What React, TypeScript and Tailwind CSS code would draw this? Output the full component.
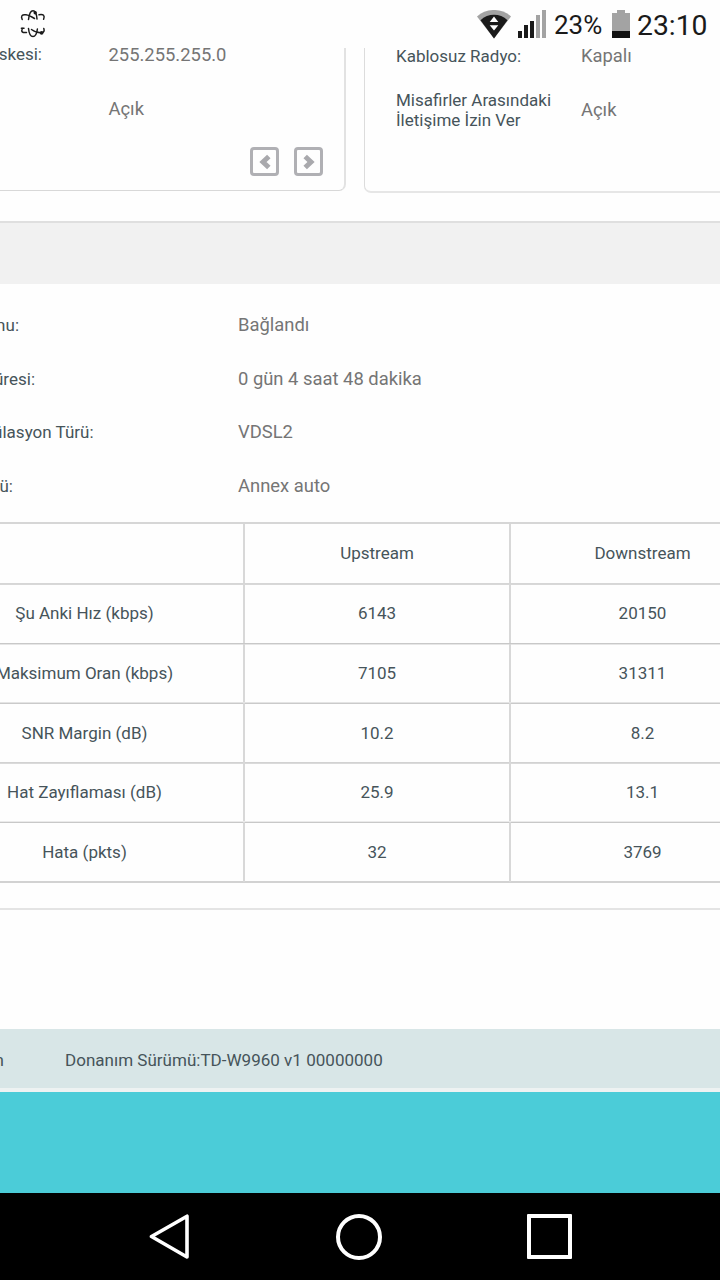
import type { ReactNode } from "react";

const connection = [
  { label: "Durumu:", value: "Bağlandı", labelEnd: "w-[19px]", height: "h-[54px]" },
  { label: "Süresi:", value: "0 gün 4 saat 48 dakika", labelEnd: "w-[35px]", height: "h-[54px]" },
  { label: "Modülasyon Türü:", value: "VDSL2", labelEnd: "w-[93.5px]", height: "h-[53px]" },
  { label: "Türü:", value: "Annex auto", labelEnd: "w-[13px]", height: "h-[54px]" },
];

const stats = [
  { name: "Şu Anki Hız (kbps)", up: "6143", down: "20150", cls: "h-[60px] leading-[58px] border-[#d6d6d6] shadow-[inset_0_1px_0_#d8d8d8]" },
  { name: "Maksimum Oran (kbps)", up: "7105", down: "31311", cls: "h-[59px] leading-[58px] border-[#c8c8c8] shadow-[inset_0_1px_0_#e6e6e6]" },
  { name: "SNR Margin (dB)", up: "10.2", down: "8.2", cls: "h-[60px] leading-[60px] border-[#e4e4e4] shadow-[inset_0_1px_0_#cacaca]" },
  { name: "Hat Zayıflaması (dB)", up: "25.9", down: "13.1", cls: "h-[59px] leading-[58px] border-[#d2d2d2] shadow-[inset_0_1px_0_#dadada]" },
  { name: "Hata (pkts)", up: "32", down: "3769", cls: "h-[60px] leading-[60px] border-[#ebebeb] shadow-[inset_0_1px_0_#c8c8c8]" },
];

// label whose beginning is scrolled off the left edge
function CutLabel({ children, className }: { children: ReactNode; className: string }) {
  return (
    <div className={`flex shrink-0 justify-end overflow-hidden whitespace-nowrap text-[17px] text-[#46545a] ${className}`}>
      <span>{children}</span>
    </div>
  );
}

function AtomIcon() {
  return (
    <svg width="26" height="30" viewBox="0 0 26 30" fill="none" stroke="#1c1c1c" strokeWidth="1.5" strokeLinecap="round">
      <path d="M2.2 10.5C0.6 7 2 5.2 6 5.8C9 6.2 12 8 14.5 9.5" />
      <path d="M8.5 10.5C9.3 4 11 1.8 13 1.8C15.2 1.8 16.6 5 17 10" />
      <path d="M19 5.8C23.5 5 25.1 6.5 23.6 10.3" />
      <circle cx="15.2" cy="3.8" r="1.7" fill="#1c1c1c" stroke="none" />
      <path d="M2.4 19.5C0.8 22.6 2.2 24 6.5 23.5" />
      <path d="M1.4 19.3h2.6" />
      <path d="M8.5 19.5C9 24.5 11 27.6 13 27.6C15 27.6 16.8 24.5 17.4 20" />
      <path d="M11.5 20.5C14.5 22.8 18 24 21.5 23.8C24 23.6 24.6 21.8 23.8 19.5" />
      <circle cx="21.6" cy="23.8" r="1.9" fill="#1c1c1c" stroke="none" />
    </svg>
  );
}

function WifiIcon() {
  return (
    <svg width="34" height="29" viewBox="0 0 34 29">
      <path d="M0 6.5C9-2.2 25-2.2 34 6.5L17 28.5Z" fill="#a3a3a3" />
      <path d="M3.5 10.2C11 3 23 3 30.5 10.2L17 28.5Z" fill="#1a1a1a" />
      <path d="M12.7 12L17 6.5L21.3 12ZM12.7 15.3H21.3L17 20.6Z" fill="#fff" />
    </svg>
  );
}

function SignalIcon() {
  return (
    <svg width="28" height="28" viewBox="0 0 28 28">
      <path d="M0 21h4v7H0zM6 15h4v13H6zM12 11h4v17h-4z" fill="#1a1a1a" />
      <path d="M18 5h4v23h-4zM24 0h4v28h-4z" fill="#a3a3a3" />
    </svg>
  );
}

function BatteryIcon() {
  return (
    <svg width="18" height="28" viewBox="0 0 18 28">
      <path d="M5 0h8v3h5v18H0V3h5z" fill="#a3a3a3" />
      <path d="M0 21h18v7H0z" fill="#111" />
    </svg>
  );
}

function PagerButton({ next = false }: { next?: boolean }) {
  return (
    <button type="button" className="flex size-[29px] items-center justify-center rounded-[4px] border-3 border-[#b0b0b4]">
      <svg width="12" height="16" viewBox="0 0 12 16" className={`shrink-0 ${next ? "rotate-180" : ""}`}>
        <path d="M8 4.2L4 8L8 11.8" fill="none" stroke="#a9a9ad" strokeWidth="5" strokeLinecap="square" />
      </svg>
    </button>
  );
}

export default function App() {
  return (
    <div className="flex h-[1280px] w-[720px] flex-col overflow-hidden bg-[#fefefe] font-['Roboto',sans-serif] text-[17px] text-[#46545a]">
      <header className="flex h-12 shrink-0 items-center text-[#1a1a1a]">
        <div className="ml-[20px]">
          <AtomIcon />
        </div>
        <div className="ml-auto flex items-center pr-[13px]">
          <WifiIcon />
          <div className="ml-[7px]">
            <SignalIcon />
          </div>
          <span className="ml-[8px] w-[49px] whitespace-nowrap pt-[2px] text-[26px] leading-[46px]">23%</span>
          <div className="ml-[9px]">
            <BatteryIcon />
          </div>
          <span className="ml-[7px] w-[70px] whitespace-nowrap pt-[4px] text-[28.3px] leading-[44px]">23:10</span>
        </div>
      </header>

      <section className="flex h-[145px] shrink-0 gap-[18px]">
        <div className="flex h-[143px] w-[346px] flex-col rounded-br-[7px] border-r-2 border-b border-r-[#e2e2e2] border-b-[#d8d8d8]">
          <div className="flex h-[14px] items-center">
            <CutLabel className="w-[42px]">Alt Ağ Maskesi:</CutLabel>
            <span className="ml-[66.5px] text-[18.4px] text-[#757575]">255.255.255.0</span>
          </div>
          <div className="mt-[33px] flex h-[28px] items-center pl-[108.5px] text-[18.4px] text-[#757575]">Açık</div>
          <div className="mt-[24px] flex gap-[15px] pl-[250px]">
            <PagerButton />
            <PagerButton next />
          </div>
        </div>
        <div className="h-[145px] flex-1 rounded-bl-[7px] border-b-2 border-l border-b-[#e6e6e6] border-l-[#dcdcdc] pl-[31px]">
          <div className="flex h-4 items-center">
            <span className="w-[185px] pt-[2px]">Kablosuz Radyo:</span>
            <span className="text-[18.4px] text-[#757575]">Kapalı</span>
          </div>
          <div className="mt-[26px] flex h-[40px] items-center">
            <span className="w-[185px] leading-5">
              Misafirler Arasındaki
              <br />
              İletişime İzin Ver
            </span>
            <span className="text-[18.4px] text-[#757575]">Açık</span>
          </div>
        </div>
      </section>

      <div className="mt-[28px] h-[63px] shrink-0 border-t-2 border-[#dfdfdf] bg-[#f1f1f1]" />

      <section className="h-[238px] shrink-0 pt-[14px]">
        {connection.map((row) => (
          <div key={row.label} className={`flex items-center leading-[26px] ${row.height}`}>
            <div className="w-[238px] pb-[1px]">
              <CutLabel className={row.labelEnd}>{row.label}</CutLabel>
            </div>
            <span className="pb-[1px] text-[18.4px] text-[#757575]">{row.value}</span>
          </div>
        ))}
      </section>

      <section className="-ml-[75px] w-[850px] shrink-0">
        <div className="grid h-[61px] grid-cols-[320px_266px_264px] border-t-2 border-[#d6d6d6] text-center leading-[59px]">
          <div className="border-r-2 border-[#d8d8d8]" />
          <div className="border-r-2 border-[#d8d8d8]">Upstream</div>
          <div className="pr-[1px]">Downstream</div>
        </div>
        {stats.map((row) => (
          <div key={row.name} className={`grid grid-cols-[320px_266px_264px] border-t text-center ${row.cls}`}>
            <div className="border-r-2 border-[#d8d8d8] pl-[1px]">{row.name}</div>
            <div className="border-r-2 border-[#d8d8d8]">{row.up}</div>
            <div className="pr-[1px]">{row.down}</div>
          </div>
        ))}
        <div className="h-[2px] bg-[#d2d2d2]" />
      </section>

      <div className="mt-[25px] h-[2px] shrink-0 bg-[#e4e4e4]" />

      <footer className="mt-[119px] flex h-[63px] shrink-0 items-center border-b-4 border-[#edf2f2] bg-[#d8e6e7] pt-[4px]">
        <CutLabel className="w-1">Yazılım</CutLabel>
        <span className="ml-[61px] text-[17.04px]">Donanım Sürümü:TD-W9960 v1 00000000</span>
      </footer>
      <div className="h-[101px] shrink-0 bg-[#4bccd8]" />

      <nav className="flex h-[87px] shrink-0 items-center bg-black">
        <svg width="42" height="46" viewBox="0 0 42 46" className="ml-[149px]">
          <path d="M2.5 22.5L38 2.2V43Z" fill="none" stroke="#fff" strokeWidth="3.6" strokeLinejoin="round" />
        </svg>
        <div className="ml-[145px] size-[46px] rounded-full border-[4px] border-white" />
        <div className="ml-[145px] size-[45px] rounded-[1px] border-4 border-white" />
      </nav>
    </div>
  );
}
